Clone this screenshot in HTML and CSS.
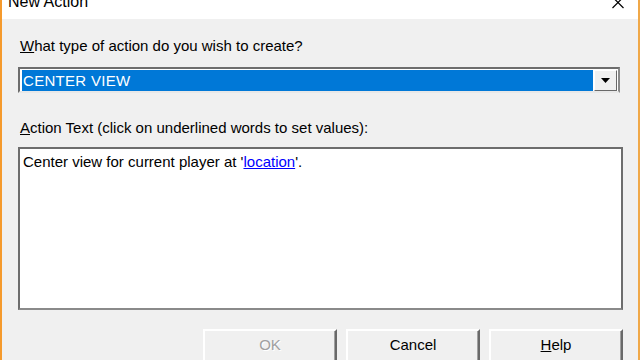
FILE: index.html
```html
<!DOCTYPE html>
<html lang="en">
<head>
  <meta charset="UTF-8">
  <title>New Action</title>
  <link rel="stylesheet" href="styles.css">
</head>
<body>
  <div class="window">
    <!-- Title bar -->
    <div class="titlebar">
      <span class="title">New Action</span>
      <svg class="close" width="14" height="12" viewBox="0 0 14 12">
        <path d="M1.5 -3 L12.5 8 M12.5 -3 L1.5 8" stroke="#000" stroke-width="1.2" fill="none"/>
      </svg>
    </div>

    <div class="content">
      <div class="label"><u>W</u>hat type of action do you wish to create?</div>

      <!-- Combo box -->
      <div class="combo">
        <div class="combo-value">CENTER VIEW</div>
        <div class="combo-button">
          <svg width="9" height="5" viewBox="0 0 9 5"><path d="M0 0 H9 L4.5 5 Z" fill="#000"/></svg>
        </div>
      </div>

      <div class="label second"><u>A</u>ction Text (click on underlined words to set values):</div>

      <div class="textbox">
        Center view for current player at '<a class="value-link">location</a>'.
      </div>

      <div class="buttons">
        <button class="btn disabled">OK</button>
        <button class="btn">Cancel</button>
        <button class="btn"><u>H</u>elp</button>
      </div>
    </div>
  </div>
</body>
</html>
```

FILE: styles.css
```css
/* Dialog window */
body {
  margin: 0;
  width: 640px;
  height: 360px;
  overflow: hidden;
  font-family: 'Liberation Sans', Arial, sans-serif;
  font-size: 15px;
  color: #000;
}

.window {
  height: 360px;
  background: #f0f0f0;
  border-left: 2px solid #f59a2c;
  border-right: 2px solid #f0a848;
  box-sizing: border-box;
}

.titlebar {
  height: 19px;
  background: #fff;
  display: flex;
  justify-content: space-between;
  overflow: hidden;
}

.titlebar .title {
  font-size: 16px;
  line-height: 16px;
  margin-top: -6px;
  margin-left: 6px;
  color: #000;
}

.titlebar .close {
  margin-right: 13px;
  margin-top: 0;
}

.content {
  padding: 18px 15px 0 16px;
}

.label {
  line-height: 17px;
  padding-left: 2px;
}

.label.second {
  margin-top: 26px;
}

/* Combo box */
.combo {
  margin-top: 13px;
  margin-right: 3px;
  height: 26px;
  box-sizing: border-box;
  display: flex;
  border-top: 2px solid #6d6d6d;
  border-left: 2px solid #6d6d6d;
  border-right: 2px solid #8a8a8a;
  border-bottom: 2px solid #e8e8e8;
  background: #fff;
  padding: 1px 1px 0 2px;
}

.combo-value {
  flex: 1;
  background: #0078d7;
  color: #fff;
  line-height: 21px;
  padding-left: 1px;
  letter-spacing: 0.3px;
}

.combo-button {
  width: 23px;
  height: 21px;
  box-sizing: border-box;
  background: #f0f0f0;
  border-top: 1px solid #fff;
  border-left: 1px solid #fff;
  border-right: 1px solid #696969;
  border-bottom: 1px solid #696969;
  display: flex;
  align-items: center;
  justify-content: center;
  margin-left: 1px;
}

/* Text area */
.textbox {
  margin-top: 11px;
  height: 163px;
  box-sizing: border-box;
  background: #fff;
  border-top: 2px solid #6d6d6d;
  border-left: 2px solid #6d6d6d;
  border-right: 2px solid #6d6d6d;
  border-bottom: 2px solid #8a8a8a;
  padding: 4px 3px;
  line-height: 17px;
}

.value-link {
  color: #0000ff;
  text-decoration: underline;
}

/* Buttons */
.buttons {
  display: flex;
  justify-content: flex-end;
  gap: 9px;
  margin-top: 19px;
}

.btn {
  width: 134px;
  height: 34px;
  font-family: 'Liberation Sans', Arial, sans-serif;
  font-size: 15px;
  color: #000;
  background: #f0f0f0;
  border-top: 2px solid #fff;
  border-left: 2px solid #fff;
  border-right: 2px solid #696969;
  border-bottom: 2px solid #696969;
  box-shadow: inset -1px -1px 0 #a0a0a0;
  padding: 0 0 3px 0;
}

.btn.disabled {
  color: #a0a0a0;
  text-shadow: 1px 1px 0 #fff;
}
```
